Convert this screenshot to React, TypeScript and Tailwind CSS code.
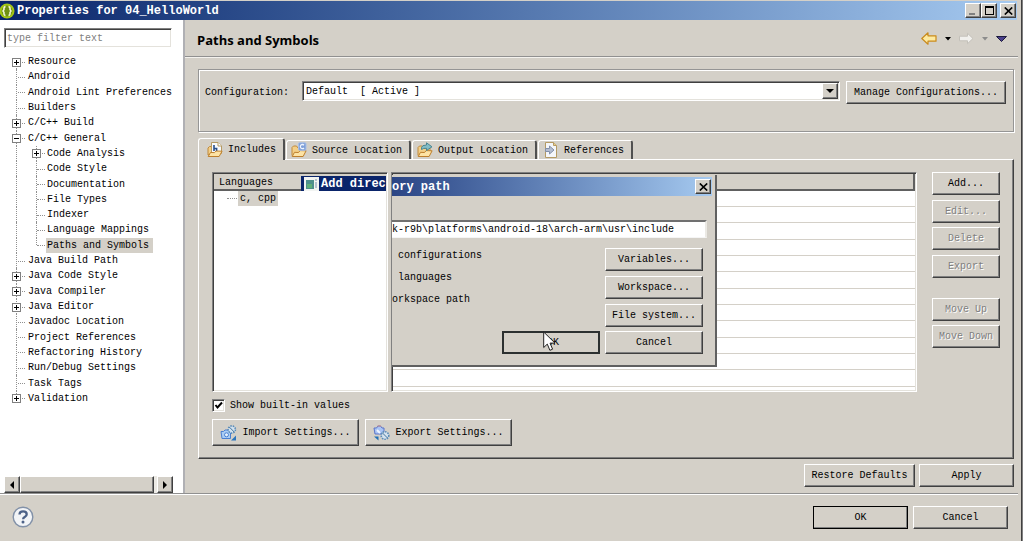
import type { ReactNode } from "react";

const raised =
  "border border-t-white border-l-white border-r-[#404040] border-b-[#404040] shadow-[inset_-1px_-1px_0_#808080] bg-[#d4d0c8]";
const sunken =
  "border border-t-[#808080] border-l-[#808080] border-r-white border-b-white shadow-[inset_1px_1px_0_#404040,inset_-1px_-1px_0_#e4e2dc] bg-white";

type Node = { label: string; level: 1 | 2; box?: "+" | "-" };

const nodes: Node[] = [
  { label: "Resource", level: 1, box: "+" },
  { label: "Android", level: 1 },
  { label: "Android Lint Preferences", level: 1 },
  { label: "Builders", level: 1 },
  { label: "C/C++ Build", level: 1, box: "+" },
  { label: "C/C++ General", level: 1, box: "-" },
  { label: "Code Analysis", level: 2, box: "+" },
  { label: "Code Style", level: 2 },
  { label: "Documentation", level: 2 },
  { label: "File Types", level: 2 },
  { label: "Indexer", level: 2 },
  { label: "Language Mappings", level: 2 },
  { label: "Paths and Symbols", level: 2 },
  { label: "Java Build Path", level: 1 },
  { label: "Java Code Style", level: 1, box: "+" },
  { label: "Java Compiler", level: 1, box: "+" },
  { label: "Java Editor", level: 1, box: "+" },
  { label: "Javadoc Location", level: 1 },
  { label: "Project References", level: 1 },
  { label: "Refactoring History", level: 1 },
  { label: "Run/Debug Settings", level: 1 },
  { label: "Task Tags", level: 1 },
  { label: "Validation", level: 1, box: "+" },
];

function Expander({ kind }: { kind: "+" | "-" }) {
  return (
    <button
      type="button"
      aria-label={kind === "+" ? "Expand" : "Collapse"}
      className="absolute top-1/2 left-[12px] -mt-1 size-[9px] border border-[#808080] bg-white"
    >
      <svg viewBox="0 0 7 7" className="block size-[7px]" shapeRendering="crispEdges">
        <path d={kind === "+" ? "M1 3h5v1H1zM3 1h1v5H3z" : "M1 3h5v1H1z"} fill="#000" />
      </svg>
    </button>
  );
}

function Gutter({ node, first, last }: { node: Node; first: boolean; last: boolean }) {
  const span = first ? "top-1/2 bottom-0" : last ? "top-0 bottom-1/2" : "inset-y-0";
  return (
    <span className="relative w-[28px] shrink-0 self-stretch">
      <span className={`absolute left-[16px] border-l border-dotted border-[#909090] ${span}`} />
      {node.level === 1 && (
        <span className="absolute top-1/2 right-[3px] left-[18px] border-t border-dotted border-[#909090]" />
      )}
      {node.level === 1 && node.box && <Expander kind={node.box} />}
    </span>
  );
}

function SubGutter({ node, last }: { node: Node; last: boolean }) {
  return (
    <span className="relative -ml-2 w-[27px] shrink-0 self-stretch">
      <span
        className={`absolute left-[16px] border-l border-dotted border-[#909090] ${last ? "top-0 bottom-1/2" : "inset-y-0"}`}
      />
      <span className="absolute top-1/2 right-[2px] left-[17px] border-t border-dotted border-[#909090]" />
      {node.box && <Expander kind={node.box} />}
    </span>
  );
}

function Tree() {
  return (
    <ul role="tree" aria-label="Property pages" className="mt-[6px] mr-[9px] grid h-[352px] auto-rows-fr overflow-hidden">
      {nodes.map((n, i) => {
        const selected = n.label === "Paths and Symbols";
        return (
          <li key={n.label} role="treeitem" aria-level={n.level} aria-selected={selected} className="flex items-center whitespace-nowrap">
            <Gutter node={n} first={i === 0} last={i === nodes.length - 1} />
            {n.level === 2 && <SubGutter node={n} last={selected} />}
            <span className={selected ? "-ml-px bg-[#d4d0c8] pr-[4px] pl-px leading-[15px]" : "leading-[15px]"}>{n.label}</span>
          </li>
        );
      })}
    </ul>
  );
}

function Btn({
  children,
  className = "",
  disabled = false,
}: {
  children: ReactNode;
  className?: string;
  disabled?: boolean;
}) {
  return (
    <button
      type="button"
      disabled={disabled}
      className={`flex h-[23px] items-center justify-center whitespace-nowrap ${raised} ${disabled ? "text-[#808080] [text-shadow:1px_1px_0_#fff]" : ""} ${className}`}
    >
      {children}
    </button>
  );
}

function Folder() {
  return (
    <>
      <path d="M1 13.5V5.5l1.5-1.5h3L7 6h6v3" fill="#f3cf87" stroke="#c08a3c" />
      <path d="M1.2 14.5l2.3-4.2 4 .2 1.6-1.9 6 .2-3 5.7z" fill="#fde3a4" stroke="#bd7f2c" strokeLinejoin="round" />
    </>
  );
}

function IncludesIcon() {
  return (
    <svg viewBox="0 0 16 16" className="size-4">
      <path d="M1 13V6l1.5-1.5H5V12z" fill="#f3cf87" stroke="#c08a3c" />
      <path d="M4.5.5h6.5L14.5 4v7.5h-10z" fill="#f8fafd" stroke="#b59a63" />
      <path d="M11 .5V4h3.5" fill="#fff" stroke="#b59a63" />
      <path d="M7 3v6M7 6.5h2.6V9" fill="none" stroke="#274f8c" strokeWidth="1.6" />
      <path d="M1.2 14.5l2.3-4 4 .1 1.6-1.6 6 .2-3 5.3z" fill="#fde3a4" stroke="#bd7f2c" strokeLinejoin="round" />
    </svg>
  );
}

function SourceIcon() {
  return (
    <svg viewBox="0 0 16 16" className="size-4">
      <Folder />
      <rect x="7.5" y=".8" width="7.5" height="7.5" rx="1" fill="#7e9fd8" stroke="#a9bfe6" />
      <path d="M13 3.2a2.1 2.1 0 1 0 0 2.8" fill="none" stroke="#eef4ff" strokeWidth="1.3" />
    </svg>
  );
}

function OutputIcon() {
  return (
    <svg viewBox="0 0 16 16" className="size-4">
      <Folder />
      <path d="M4.5 5.5Q5 3 9.5 3V.8l5.5 4-5.500 3.700V6.300Q6.500 6 4.500 7.500z" fill="#82bcc6" stroke="#4a8592" strokeLinejoin="round" />
    </svg>
  );
}

function ReferencesIcon() {
  return (
    <svg viewBox="0 0 16 16" className="size-4">
      <path d="M2.500.5h8l3 3v12h-11z" fill="#f4f6fa" stroke="#b59a63" />
      <path d="M10.500.5v3h3" fill="#e9cf8f" stroke="#b59a63" />
      <path d="M2.500 6.500h4V4l4.500 4-4.500 4V9.500h-4z" fill="#b4bdd0" stroke="#8390aa" strokeLinejoin="round" />
    </svg>
  );
}

function ImportIcon() {
  return (
    <svg viewBox="0 0 17 16" className="h-4 w-[17px]">
      <path d="M1 6.500h2.500L5 5h3l1 1.500h1.500v7H2z" fill="#a9cdf5" stroke="#4a7fd0" />
      <circle cx="6.500" cy="9.800" r="2" fill="#e6f3ff" stroke="#4a7fd0" />
      <circle cx="11.800" cy="4.500" r="3.600" fill="#d4e2ee" stroke="#5b8cb8" strokeDasharray="1.500 1" strokeWidth="1.600" />
      <path d="M9.500 2.200l4.700 4.800" stroke="#44749c" />
      <path d="M16 10.500V15.500H11z" fill="#2d76bd" />
    </svg>
  );
}

function ExportIcon() {
  return (
    <svg viewBox="0 0 17 16" className="h-4 w-[17px]">
      <path d="M1 3h2.500L5 1h2.500L9 3h2v6H2z" fill="#a9c4f5" stroke="#5a74c8" />
      <path d="M4.500 1h3.500" stroke="#c88a8a" />
      <path d="M4 5l3 3" stroke="#eef5ff" strokeWidth="2" />
      <circle cx="12" cy="10.500" r="3.800" fill="#d4e2ee" stroke="#5b8cb8" strokeDasharray="1.500 1" strokeWidth="1.600" />
      <path d="M9 7.500l5.500 5.500" stroke="#44749c" />
      <path d="M1 11.500h4.500v4z" fill="#1f6fb5" />
    </svg>
  );
}

function Tab({ icon, label, active = false }: { icon: ReactNode; label: string; active?: boolean }) {
  return (
    <button
      type="button"
      role="tab"
      aria-selected={active}
      className={`flex items-center gap-[5px] rounded-t-[3px] border-t border-r-2 border-l border-t-white border-r-[#505050] border-l-white bg-[#d4d0c8] pr-[7px] ${
        active ? "relative z-10 h-[22px] pl-[8px]" : "mt-[2px] h-[19px] pl-[4px]"
      }`}
    >
      {icon}
      {label}
    </button>
  );
}

function CloseGlyph() {
  return (
    <svg viewBox="0 0 9 8" className="h-2 w-[9px]">
      <path d="M.8.5l7.400 7M8.200.5L.8 7.500" stroke="#000" strokeWidth="1.700" />
    </svg>
  );
}

function AddDirectoryDialog() {
  return (
    <section
      role="dialog"
      aria-label="Add directory path"
      className="absolute top-[2px] left-0 w-[325px] border-r-2 border-b-2 border-[#606060] bg-[#d4d0c8] pt-[2px] pb-[11px]"
    >
      <header className="mr-[3px] flex h-[19px] items-center justify-between bg-linear-to-r from-[#2b4585] to-[#a6caf0] pr-px">
        <h2 className="text-xs font-bold text-white">ory path</h2>
        <button type="button" aria-label="Close" className={`flex h-[15px] w-4 items-center justify-center ${raised}`}>
          <CloseGlyph />
        </button>
      </header>
      <input
        aria-label="Directory"
        readOnly
        value="k-r9b\platforms\android-18\arch-arm\usr\include"
        className="mt-[24px] block h-[18px] w-[315px] border-t-2 border-r-2 border-b border-t-[#707070] border-r-[#ebe9e4] border-b-[#f5f5f5] bg-white outline-none"
      />
      <div className="mt-[10px] flex justify-between pr-[12px]">
        <div className="flex flex-col gap-[7px] leading-[15px]">
          <p className="ml-[6px]">configurations</p>
          <p className="ml-[6px]">languages</p>
          <p>orkspace path</p>
        </div>
        <div className="flex w-[98px] flex-col gap-[5px]">
          <Btn>Variables...</Btn>
          <Btn>Workspace...</Btn>
          <Btn>File system...</Btn>
        </div>
      </div>
      <div className="mt-[4px] flex justify-end gap-[5px] pr-[12px]">
        <div className="relative w-[98px]">
          <button type="button" className="h-[23px] w-full border-2 border-[#2c3030] bg-[#d4d0c8] pl-1">
            OK
          </button>
          <svg viewBox="0 0 13 21" className="absolute top-0 left-[41px] h-[21px] w-[13px]">
            <path
              d="M.7 1v15.500l3.600-3.400 2.600 6.200 2.700-1.100-2.600-6.100h5z"
              fill="#fff"
              stroke="#222"
              strokeLinejoin="round"
            />
          </svg>
        </div>
        <Btn className="w-[98px]">Cancel</Btn>
      </div>
    </section>
  );
}

function LanguageList() {
  return (
    <div className={`w-[176px] shrink-0 p-px ${sunken}`}>
      <div className="flex h-[17px] bg-[#d4d0c8]">
        <h3 className="w-[87px] border-b-2 border-[#606060] pl-[5px] leading-[17px]">Languages</h3>
        <div className="mt-[2px] flex flex-1 items-end gap-[2px] bg-[#0a246a] pl-[3px] text-white">
          <svg viewBox="0 0 15 14" className="h-[14px] w-[15px] shrink-0">
            <rect width="15" height="14" fill="#f2f4f2" />
            <rect x="2" y="3" width="8" height="9" fill="#4e8f8c" />
            <rect x="3" y="7" width="5" height="4" fill="#5fae7a" />
            <path d="M12 2v2M12 5v6" stroke="#7890b0" />
          </svg>
          <span className="text-xs leading-[14px] font-bold whitespace-nowrap">Add direc</span>
        </div>
      </div>
      <ul className="pl-[13px]">
        <li className="flex items-center">
          <span className="mr-px w-[10px] border-t border-dotted border-[#909090]" />
          <span className="bg-[#d4d0c8] px-[2px] leading-[15px]">c, cpp</span>
        </li>
      </ul>
    </div>
  );
}

function IncludeTable() {
  return (
    <div className={`relative min-w-0 flex-1 overflow-hidden p-px ${sunken}`}>
      <table className="w-full table-fixed border-separate border-spacing-0">
        <thead>
          <tr>
            <th scope="col" aria-label="Include directories" className="h-[17px] border-r-2 border-b-2 border-[#606060] bg-[#d4d0c8] p-0" />
          </tr>
        </thead>
        <tbody>
          {Array.from({ length: 12 }, (_, i) => (
            <tr key={i}>
              <td className={`border-b border-[#d4d0c8] p-0 ${i % 3 === 2 ? "h-[17px]" : "h-[16px]"}`} />
            </tr>
          ))}
        </tbody>
      </table>
      <AddDirectoryDialog />
    </div>
  );
}

function TitleBar() {
  return (
    <header className="mt-px mr-[4px] flex h-[19px] items-center bg-linear-to-r from-[#0a246a] to-[#a6caf0] pr-px">
      <svg viewBox="0 0 16 16" className="size-4">
        <circle cx="7" cy="8" r="7.500" fill="#a4c614" />
        <circle cx="7" cy="8" r="5.500" fill="#6f8f12" />
        <path d="M5.500 3.500Q3.500 4 4 6.500L3 8l1 1.500q-.500 2.500 1.500 3M8.500 3.500q2 .500 1.500 3L11 8l-1 1.500q.500 2.500-1.500 3" fill="none" stroke="#f4f8d8" strokeWidth="1.500" />
      </svg>
      <h1 className="ml-px flex-1 text-xs font-bold text-white">Properties for 04_HelloWorld</h1>
      <button type="button" aria-label="Minimize" className={`flex h-[15px] w-4 items-end justify-start pb-[2px] pl-[3px] ${raised}`}>
        <span className="h-[2px] w-[6px] bg-[#808080]" />
      </button>
      <button type="button" aria-label="Maximize" className={`flex h-[15px] w-4 items-center justify-center ${raised}`}>
        <span className="h-[9px] w-[9px] border border-t-2 border-black" />
      </button>
      <button type="button" aria-label="Close" className={`ml-[3px] flex h-[15px] w-4 items-center justify-center ${raised}`}>
        <CloseGlyph />
      </button>
    </header>
  );
}

function Caret({ color }: { color: string }) {
  return (
    <svg viewBox="0 0 6 4" className="h-1 w-[6px]">
      <path d="M0 0h6L3 3.500z" fill={color} />
    </svg>
  );
}

function PageHeader() {
  return (
    <div className="flex h-[37px] items-center border-b border-[#909090] pr-[11px] pl-[12px] shadow-[0_1px_0_#f4f2ee]">
      <h2 className="flex-1 pt-1 font-['Open_Sans','Noto_Sans',sans-serif] text-[13px] font-bold">Paths and Symbols</h2>
      <nav aria-label="History" className="flex items-center gap-[8px] pt-px">
        <button type="button" aria-label="Back">
          <svg viewBox="0 0 16 13" className="block h-[13px] w-4">
            <path d="M.8 6.500L7 .8v3h8v5.400H7v3z" fill="#fdeaa0" stroke="#c98a1c" strokeWidth="1.200" strokeLinejoin="round" />
          </svg>
        </button>
        <button type="button" aria-label="Back history">
          <Caret color="#000" />
        </button>
        <button type="button" aria-label="Forward" disabled>
          <svg viewBox="0 0 15 13" className="block h-[13px] w-[15px]">
            <path d="M14 6.500L8.500 1.300v2.900h-8v4.600h8v2.900z" fill="#f1f0ed" stroke="#c4c1ba" strokeLinejoin="round" />
          </svg>
        </button>
        <button type="button" aria-label="Forward history" disabled>
          <Caret color="#8c8c8c" />
        </button>
        <button type="button" aria-label="View menu">
          <svg viewBox="0 0 11 6" className="block h-[6px] w-[11px]">
            <path d="M.5.500h10L5.500 5.500z" fill="#4a3f8c" stroke="#1c1a3c" />
          </svg>
        </button>
      </nav>
    </div>
  );
}

function Sidebar() {
  return (
    <aside className="flex w-[183px] shrink-0 flex-col bg-white">
      <input
        aria-label="Filter"
        placeholder="type filter text"
        className={`mt-[8px] mr-[11px] ml-[4px] h-[20px] px-[2px] outline-none placeholder:text-[#808080] ${sunken}`}
      />
      <Tree />
      <div className="mt-auto mr-[10px] ml-[4px] flex h-[17px] bg-[#eceae5]">
        <button type="button" aria-label="Scroll left" className={`flex w-4 items-center justify-center ${raised}`}>
          <svg viewBox="0 0 4 8" className="h-2 w-1">
            <path d="M4 0v8L0 4z" />
          </svg>
        </button>
        <div className={`flex-1 ${raised}`} />
        <button type="button" aria-label="Scroll right" className={`ml-[3px] flex w-4 items-center justify-center ${raised}`}>
          <svg viewBox="0 0 4 8" className="h-2 w-1">
            <path d="M0 0v8l4-4z" />
          </svg>
        </button>
      </div>
    </aside>
  );
}

function ConfigurationGroup() {
  return (
    <div className="mt-[12px] flex border border-[#959595] pt-[11px] pr-[7px] pb-[27px] pl-[6px] shadow-[1px_1px_0_#fff,inset_1px_1px_0_#fff]">
      <label htmlFor="configuration" className="w-[97px] leading-[23px]">
        Configuration:
      </label>
      <div className="relative h-[20px] min-w-0 flex-1">
        <select id="configuration" className={`h-full w-full appearance-none px-[3px] outline-none ${sunken}`}>
          <option>{"Default\u00a0 [ Active ]"}</option>
        </select>
        <span className={`pointer-events-none absolute inset-y-[2px] right-[2px] flex w-4 items-center justify-center ${raised}`}>
          <svg viewBox="0 0 8 4" className="h-1 w-2">
            <path d="M0 0h8L4 4z" />
          </svg>
        </span>
      </div>
      <Btn className="ml-[6px] w-[160px]">Manage Configurations...</Btn>
    </div>
  );
}

function IncludesPanel() {
  return (
    <div
      role="tabpanel"
      className="border border-t-white border-r-[#404040] border-b-[#404040] border-l-white px-[13px] pt-[12px] pb-[12px] shadow-[inset_-1px_-1px_0_#808080]"
    >
      <div className="flex">
        <div className="flex h-[220px] min-w-0 flex-1 gap-[3px]">
          <LanguageList />
          <IncludeTable />
        </div>
        <div className="ml-[15px] flex w-[68px] flex-col gap-[20px]">
          <div className="flex h-[106px] flex-col justify-between">
            <Btn>Add...</Btn>
            <Btn disabled>Edit...</Btn>
            <Btn disabled>Delete</Btn>
            <Btn disabled>Export</Btn>
          </div>
          <div className="flex h-[50px] flex-col justify-between">
            <Btn disabled>Move Up</Btn>
            <Btn disabled>Move Down</Btn>
          </div>
        </div>
      </div>
      <label className="mt-[6px] flex w-fit items-center gap-[5px]">
        <span className="relative flex size-[13px]">
          <input type="checkbox" defaultChecked className={`peer size-[13px] appearance-none ${sunken}`} />
          <svg viewBox="0 0 13 13" className="pointer-events-none absolute inset-0 hidden peer-checked:block">
            <path d="M3.500 6l2 2.500 4.500-5" fill="none" stroke="#000" strokeWidth="2" />
          </svg>
        </span>
        Show built-in values
      </label>
      <div className="mt-[6px] flex gap-[6px]">
        <Btn className="h-[27px] w-[147px] gap-[5px]">
          <ImportIcon />
          Import Settings...
        </Btn>
        <Btn className="h-[27px] w-[147px] gap-[5px]">
          <ExportIcon />
          Export Settings...
        </Btn>
      </div>
    </div>
  );
}

export default function App() {
  return (
    <div className="flex min-h-screen bg-[#808080] font-['Liberation_Mono',monospace] text-[10px] leading-[15px] text-black">
      <div className="flex min-w-0 flex-1 flex-col border-r border-[#404040] bg-[#d4d0c8]">
        <TitleBar />
        <div className="mr-[3px] flex flex-1 border-b border-[#909090] shadow-[0_1px_0_#fff]">
          <Sidebar />
          <main className="min-w-0 flex-1 border-l-2 border-[#b0b0b4]">
            <PageHeader />
            <div className="pr-[4px] pb-[4px] pl-[13px]">
              <ConfigurationGroup />
              <div role="tablist" className="mt-[6px] flex h-[21px] items-start gap-px">
                <Tab active icon={<IncludesIcon />} label="Includes" />
                <Tab icon={<SourceIcon />} label="Source Location" />
                <Tab icon={<OutputIcon />} label="Output Location" />
                <Tab icon={<ReferencesIcon />} label="References" />
              </div>
              <IncludesPanel />
              <div className="mt-[5px] flex justify-end gap-[4px]">
                <Btn className="w-[111px]">Restore Defaults</Btn>
                <Btn className="w-[95px]">Apply</Btn>
              </div>
            </div>
          </main>
        </div>
        <footer className="flex h-[47px] items-center gap-[5px] pr-[13px] pb-px pl-[12px]">
          <button type="button" aria-label="Help" className="mr-auto">
            <svg viewBox="0 0 22 22" className="block size-[22px]">
              <circle cx="11" cy="11" r="9.800" fill="#f2f4f7" stroke="#8291a8" strokeWidth="1.400" />
              <path d="M7.500 8.500q0-3.200 3.600-3.200t3.600 2.900q0 1.600-1.700 2.600-1.900 1-1.900 2.400" fill="none" stroke="#4d6288" strokeWidth="2.300" />
              <circle cx="11" cy="16" r="1.500" fill="#4d6288" />
            </svg>
          </button>
          <Btn className="w-[95px] outline-1 -outline-offset-1 outline-black">OK</Btn>
          <Btn className="w-[95px]">Cancel</Btn>
        </footer>
      </div>
      <div className="w-px" />
    </div>
  );
}
